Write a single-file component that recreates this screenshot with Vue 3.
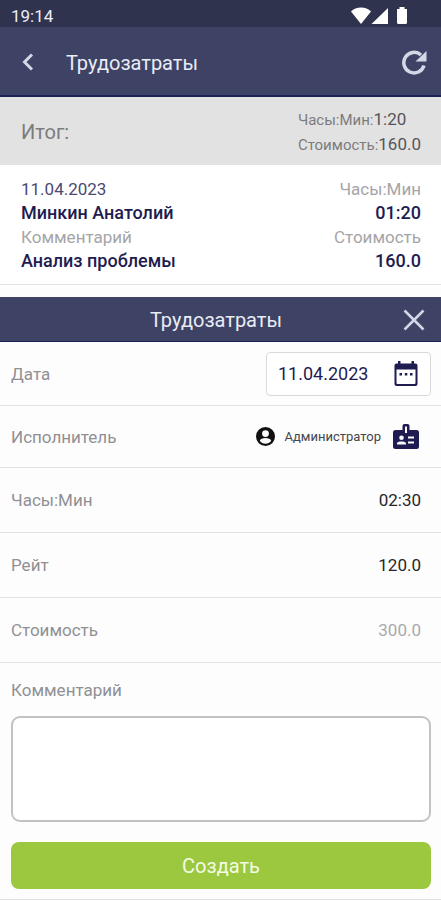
<template>
  <div class="screen">
    <div class="status-bar">
      <span>{{ clock }}</span>
      <svg class="status-icons" viewBox="0 0 58 20" aria-hidden="true">
        <path d="M0 5.5C2.5 2.8 6 1.5 10 1.5s7.5 1.3 10 4L10 18z" />
        <path d="M37 2v16H20.5z" />
        <path d="M46 3h2.500V1h5V3H56v13.500q0 1.500-1.500 1.500h-7q-1.500 0-1.500-1.500z" />
      </svg>
    </div>

    <header class="app-bar">
      <button type="button" class="icon-button" aria-label="Назад">
        <svg width="14" height="20" viewBox="0 0 14 20">
          <path d="M11 1.500L3.500 9 11 16.500" fill="none" stroke="currentColor" stroke-width="3" />
        </svg>
      </button>
      <h1>Трудозатраты</h1>
      <button type="button" class="icon-button" aria-label="Обновить">
        <svg width="26" height="26" viewBox="0 0 26 26">
          <path
            d="M23 15.500A10.300 10.300 0 1 1 20 5"
            fill="none"
            stroke="currentColor"
            stroke-width="3.500"
          />
          <path d="M25.500 1v10.500H14.500z" fill="currentColor" />
        </svg>
      </button>
    </header>

    <section class="summary">
      <h2>Итог:</h2>
      <div class="totals">
        <div>Часы:Мин:<strong>1:20</strong></div>
        <div>Стоимость:<strong>160.0</strong></div>
      </div>
    </section>

    <article v-for="entry in entries" :key="entry.id" class="entry">
      <div class="entry-line">
        <span class="entry-date">{{ entry.date }}</span>
        <span>Часы:Мин</span>
      </div>
      <div class="entry-line entry-value">
        <span>{{ entry.user }}</span>
        <span>{{ entry.time }}</span>
      </div>
      <div class="entry-line">
        <span>Комментарий</span>
        <span>Стоимость</span>
      </div>
      <div class="entry-line entry-value">
        <span>{{ entry.comment }}</span>
        <span>{{ entry.cost }}</span>
      </div>
    </article>

    <form class="editor" @submit.prevent="createEntry">
      <div class="editor-header">
        <h2>Трудозатраты</h2>
        <button type="button" class="icon-button" aria-label="Закрыть">
          <svg width="22" height="22" viewBox="0 0 22 22">
            <path d="M1.500 1.500l19 19M20.500 1.500l-19 19" stroke="currentColor" stroke-width="2.500" />
          </svg>
        </button>
      </div>

      <div class="row row-date">
        <label for="date">Дата</label>
        <div class="date-box">
          <input id="date" v-model="form.date" type="text" />
          <button type="button" class="icon-button" aria-label="Выбрать дату">
            <svg width="24" height="26" viewBox="0 0 24 26">
              <path
                fill-rule="evenodd"
                d="M4 0h2.500v2.500h11V0H20v2.500h1.500q2 0 2 2V23q0 2-2 2h-19q-2 0-2-2V4.500q0-2 2-2H4zM2.500 8.500V22q0 1 1 1h17q1 0 1-1V8.500z"
              />
              <path d="M5.500 12H8v2.500H5.500zM10.800 12h2.500v2.500h-2.500zM16 12h2.500v2.500H16z" />
            </svg>
          </button>
        </div>
      </div>

      <div class="row row-user">
        <span class="row-label">Исполнитель</span>
        <div class="user">
          <svg class="avatar" width="19" height="19" viewBox="0 0 20 20" aria-hidden="true">
            <path
              fill-rule="evenodd"
              d="M10 0a10 10 0 1 0 0 20a10 10 0 0 0 0-20zM10 3.300a3.600 3.600 0 1 1 0 7.200a3.600 3.600 0 0 1 0-7.200zM4 14.500c.8-4 11.200-4 12 0c-2.500 4-9.500 4-12 0z"
            />
          </svg>
          <span class="user-name">{{ form.user }}</span>
          <button type="button" class="icon-button" aria-label="Выбрать исполнителя">
            <svg width="26" height="26" viewBox="0 0 26 26">
              <path
                fill-rule="evenodd"
                d="M9.500 2q0-2 2-2h3q2 0 2 2v4h7q2.500 0 2.500 2.500v14q0 2.500-2.500 2.500h-21q-2.500 0-2.500-2.500v-14q0-2.500 2.500-2.500h7zM12 2.500V9h2V2.500zM8.500 11.500a2.300 2.300 0 1 0 0 4.600a2.300 2.300 0 0 0 0-4.600zM4 20.500h9v-1c0-2.600-9-2.600-9 0zM15 12.500v2h6v-2zM15 17.500v2h6v-2z"
              />
            </svg>
          </button>
        </div>
      </div>

      <div class="row row-tall">
        <label for="hours">Часы:Мин</label>
        <input id="hours" v-model="form.hours" type="text" />
      </div>
      <div class="row row-tall">
        <label for="rate">Рейт</label>
        <input id="rate" v-model="form.rate" type="text" inputmode="decimal" />
      </div>
      <div class="row row-tall">
        <label for="cost">Стоимость</label>
        <input id="cost" class="computed" :value="cost" type="text" readonly />
      </div>

      <div class="comment">
        <label for="comment">Комментарий</label>
        <textarea id="comment" v-model="form.comment"></textarea>
        <button type="submit" class="submit">Создать</button>
      </div>
    </form>
  </div>
</template>

<script setup>
import { computed, reactive, ref } from 'vue';

const clock = '19:14';

const entries = ref([
  {
    id: 1,
    date: '11.04.2023',
    user: 'Минкин Анатолий',
    time: '01:20',
    comment: 'Анализ проблемы',
    cost: '160.0',
  },
]);

const form = reactive({
  date: '11.04.2023',
  user: 'Администратор',
  hours: '02:30',
  rate: '120.0',
  comment: '',
});

const cost = computed(() => {
  const [hours, minutes] = form.hours.split(':').map(Number);
  const total = (hours + (minutes || 0) / 60) * Number(form.rate);
  return Number.isFinite(total) ? total.toFixed(1) : '';
});

const createEntry = () => {
  entries.value.push({
    id: entries.value.length + 1,
    date: form.date,
    user: form.user,
    time: form.hours,
    comment: form.comment,
    cost: cost.value,
  });
  form.comment = '';
};
</script>

<style>
body {
  margin: 0;
  background: #fdfdfd;
}
</style>

<style scoped>
.screen {
  font-family: Roboto, 'Liberation Sans', sans-serif;
  font-size: 17px;
  color: #1e1c50;
  background: #fdfdfd;
}

.screen * {
  box-sizing: border-box;
}

h1,
h2 {
  margin: 0;
  font-weight: 400;
}

button,
input,
textarea {
  font: inherit;
  color: inherit;
}

.icon-button {
  display: flex;
  padding: 0;
  border: 0;
  background: none;
  cursor: pointer;
}

.icon-button svg {
  fill: currentColor;
}

.status-bar {
  display: flex;
  align-items: center;
  justify-content: space-between;
  height: 27px;
  padding: 5px 32px 0 11px;
  background: #2f334e;
  color: #eceef5;
}

.status-icons {
  width: 58px;
  height: 20px;
  fill: #fff;
}

.app-bar {
  display: flex;
  align-items: center;
  height: 70px;
  padding: 4px 14px 0 21px;
  border-bottom: 2px solid #1a2157;
  background: #3e4265;
  color: #d3d8e6;
}

.app-bar h1 {
  flex: 1;
  padding-left: 31px;
  font-size: 20px;
  color: #e9ecf5;
}

.summary {
  display: flex;
  align-items: center;
  justify-content: space-between;
  height: 68px;
  padding: 2px 20px 0 21px;
  background: #e2e2e2;
  color: #7c7c7c;
}

.summary h2 {
  font-size: 20px;
}

.totals {
  font-size: 15px;
  line-height: 24px;
}

.totals strong {
  font-size: 17px;
  font-weight: 400;
  color: #55555b;
}

.entry {
  padding: 12px 20px 11px 21px;
  border-bottom: 1px solid #e4e4e4;
  background: #fff;
}

.entry-line {
  display: flex;
  justify-content: space-between;
  line-height: 24px;
  color: #a5a5a8;
}

.entry-date {
  color: #4a4a72;
}

.entry-value {
  font-size: 18px;
  font-weight: 500;
  color: #1e1c50;
}

.editor {
  margin-top: 12px;
  background: #fdfdfd;
}

.editor-header {
  display: grid;
  grid-template-columns: 1fr auto 1fr;
  align-items: center;
  height: 45px;
  padding: 2px 16px 0 7px;
  border-bottom: 1px solid #1a2157;
  background: #3e4265;
  color: #d3d8e6;
}

.editor-header h2 {
  grid-column: 2;
  font-size: 20px;
  color: #e9ecf5;
}

.editor-header .icon-button {
  justify-self: end;
}

.row {
  display: flex;
  align-items: center;
  justify-content: space-between;
  padding: 0 10px 0 11px;
  border-bottom: 1px solid #e2e2e2;
}

.row label,
.row-label,
.comment label {
  color: #909094;
}

.row input {
  width: 104px;
  padding: 0;
  border: 0;
  outline: 0;
  background: none;
}

.row-date {
  height: 64px;
}

.row-tall {
  height: 65px;
  padding-right: 20px;
}

.row-tall input {
  text-align: right;
  color: #26262a;
}

.row-tall .computed {
  color: #a9a9ad;
}

.date-box {
  display: flex;
  align-items: center;
  gap: 12px;
  height: 44px;
  padding: 0 12px 0 11px;
  border: 1px solid #d9d9d9;
  border-radius: 4px;
  background: #fff;
}

.date-box input {
  font-size: 18px;
}

.row-user {
  height: 62px;
}

.user {
  display: flex;
  align-items: center;
  padding-right: 12px;
}

.avatar {
  fill: #111;
}

.user-name {
  margin: 0 12px 0 10px;
  font-size: 13px;
  color: #45454b;
}

.comment {
  display: flex;
  flex-direction: column;
  padding: 15px 10px 10px 11px;
  border-bottom: 1px solid #e2e2e2;
}

.comment label {
  line-height: 24px;
}

.comment textarea {
  height: 106px;
  margin: 14px 0 20px;
  padding: 10px;
  border: 2px solid #c2c2c2;
  border-radius: 9px;
  outline: 0;
  background: #fff;
  resize: none;
}

.submit {
  height: 47px;
  border: 0;
  border-radius: 8px;
  background: #9bc83e;
  font-size: 20px;
  color: #f4fae6;
  cursor: pointer;
}
</style>
